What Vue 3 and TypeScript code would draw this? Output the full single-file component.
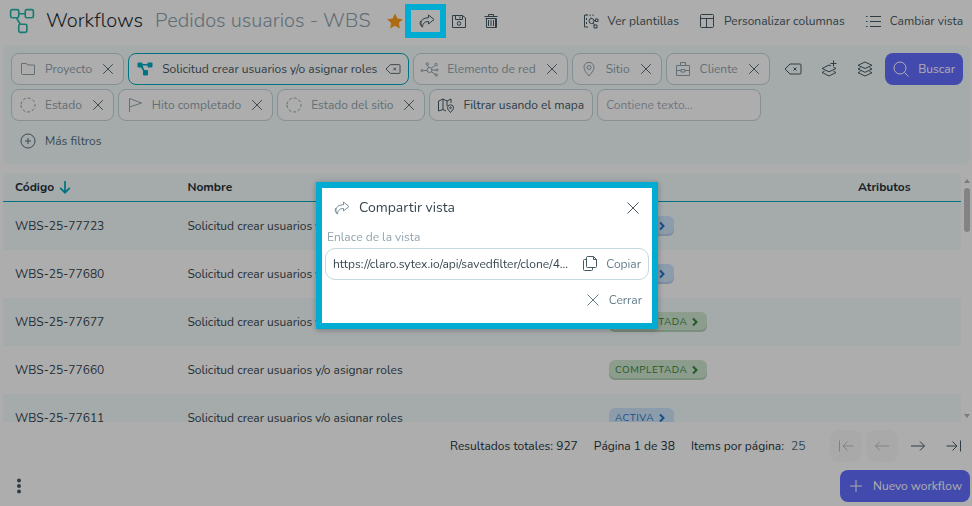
<script setup lang="ts">
import { h, ref } from 'vue'

interface Filter {
  icon: string
  label: string
  active?: boolean
}

interface Workflow {
  code: string
  name: string
  status: 'ACTIVA' | 'COMPLETADA'
}

// Stroke outlines on a 16 x 16 grid
const outlines: Record<string, string> = {
  share: 'M9.5 2 15 6.5 9.5 11V8.5C5.5 8.500 3.800 10.500 3.500 14 0 9.500 2.500 4.800 9.500 4.800ZM3.500 14C1 12.500 .7 10 1.600 8',
  save: 'M1.5 2.500h10L14.500 5v9.500H1.500ZM4.500 2.500v4h7v-4M9 3.500v2M6.200 10.500a1.800 1.800 0 1 0 3.600 0 1.800 1.800 0 1 0-3.600 0',
  trash: 'M1.5 3.5h13M5.5 3.5v-2h5v2M2.500 5.500h11V14.500H3.500V5.500M12.500 5.500v9M5.500 7v6M8 7v6M10.500 7v6',
  template: 'M4 2H1.5V14H5M4 1v2M7 1.5v1.5M10 1.5v1.5M3.5 5v2M3.5 9v2M6 8a2.5 2.5 0 1 0 5 0 2.5 2.5 0 1 0-5 0M11 7.5h1.5M12.5 6h2.5v2.5h-2.5ZM10 10l1.5 2M11 12h3v3h-3ZM8 6V4.5',
  columns: 'M2.5 1.5h11a1 1 0 0 1 1 1v11a1 1 0 0 1-1 1h-11a1 1 0 0 1-1-1v-11a1 1 0 0 1 1-1ZM1.5 5.5h13M7.5 5.5v9',
  list: 'M5 3.5h11M5 8.5h11M5 13.5h11M1 3.5h1.5M1 8.5h1.5M1 13.5h1.5',
  folder: 'M1.5 12.5v-10h4.5l2 1.5h6.5v9.5h-12a1 1 0 0 1-1-1Z',
  network: 'M5 9a2.500 2.500 0 1 0 5 0 2.500 2.500 0 1 0-5 0M-1 9.500a1 1 0 1 0 2 0 1 1 0 1 0-2 0M1 9.500h4M4 3a1.200 1.200 0 1 0 2.400 0A1.200 1.200 0 1 0 4 3M5.600 4.200l1 2.600M13 3.500a1.200 1.200 0 1 0 2.400 0A1.200 1.200 0 1 0 13 3.500M9.300 7.200l3.900-2.800M10 9h4M14 9a1 1 0 1 0 2 0 1 1 0 1 0-2 0M13 14a1.200 1.200 0 1 0 2.400 0 1.200 1.200 0 1 0-2.400 0M9.300 10.800l3.900 2.500',
  pin: 'M8 15C5 11.5 3 9 3 6.3a5 5 0 0 1 10 0C13 9 11 11.5 8 15ZM6 6.5a2 2 0 1 0 4 0 2 2 0 1 0-4 0',
  briefcase: 'M1.5 4.500h13v10h-13ZM5.500 4.500v-3h5v3M1.500 9.500h4.500M10 9.500h4.500M6 8.500h4v2.500h-4Z',
  flag: 'M2.5 15V1.5L14.5 6 2.5 10',
  map: 'M8 14 5 12.5 .5 14V4L5 2l4 2 4-2v4M5 2v10.5M9 4v5M12.5 15.500C10.800 13.500 9.500 12.300 9.500 10.800a3 3 0 0 1 6 0c0 1.500-1.300 2.700-3 4.700ZM11.700 10.800a.8.8 0 1 0 1.600 0 .8.8 0 1 0-1.600 0',
  plusCircle: 'M1 8a7 7 0 1 0 14 0 7 7 0 1 0-14 0M8 5v6M5 8h6',
  close: 'M2.500 2.500l11 11M13.500 2.500l-11 11',
  erase: 'M5 3H15a1 1 0 0 1 1 1v8a1 1 0 0 1-1 1H5L0 8ZM8.500 6.500l3 3M11.500 6.500l-3 3',
  layers: 'M8 1 15 4.300 8 7.500 1 4.300ZM3.500 6.800 1 8l7 3.300L15 8l-2.500-1.200M3.500 10.500 1 11.700 8 15l7-3.300-2.500-1.200',
  layersPlus: 'M10 5 8 4 1 7.500 8 10.800 15 7.500 12.500 6.300M3.500 10.300 1 11.500 8 15l7-3.500-2.500-1.200M12.500-.5v6M9.500 2.500h6',
  search: 'M1 7a6 6 0 1 0 12 0A6 6 0 1 0 1 7M11.300 11.300l4.200 4.200',
  arrowDown: 'M8 1v13.500M2.500 9l5.500 5.500L13.500 9',
  chevron: 'M6 4.500 9.500 8 6 11.500',
  copy: 'M5.500 .5h6l3 3v7a1 1 0 0 1-1 1h-8a1 1 0 0 1-1-1v-9a1 1 0 0 1 1-1ZM11.500 .5v3h3M4.500 3.500h-2a1 1 0 0 0-1 1v9a1 1 0 0 0 1 1h7a1 1 0 0 0 1-1v-2',
  first: 'M1.5 2.500v11M15.500 8H5M9.500 3.500 5 8l4.500 4.500',
  prev: 'M15 8H1.5M6 3.5 1.5 8 6 12.5',
  next: 'M1 8h13.5M10 3.5 14.5 8 10 12.5',
  last: 'M14.500 2.500v11M.5 8H11M6.500 3.500 11 8l-4.500 4.500',
  plus: 'M8 2v12M2 8h12',
  logo: 'M2 1h3a1 1 0 0 1 1 1v3a1 1 0 0 1-1 1H2a1 1 0 0 1-1-1V2a1 1 0 0 1 1-1ZM11 1h3a1 1 0 0 1 1 1v3a1 1 0 0 1-1 1h-3a1 1 0 0 1-1-1V2a1 1 0 0 1 1-1ZM7 10h3a1 1 0 0 1 1 1v3a1 1 0 0 1-1 1H7a1 1 0 0 1-1-1v-3a1 1 0 0 1 1-1ZM6 3.500h4M4.500 6 7 10',
  status: 'M1 8a7 7 0 1 0 14 0 7 7 0 1 0-14 0',
}

// Solid shapes on the same grid
const solids: Record<string, string> = {
  star: 'M8 .5l2.4 4.9 5.4.8-3.9 3.8.9 5.4L8 12.8l-4.8 2.6.9-5.4L.2 6.2l5.4-.8Z',
  dots: 'M6 2.5a2 2 0 1 0 4 0 2 2 0 1 0-4 0M6 8a2 2 0 1 0 4 0 2 2 0 1 0-4 0M6 13.5a2 2 0 1 0 4 0 2 2 0 1 0-4 0',
  nodes: 'M1.500 1.500h3a1 1 0 0 1 1 1V3h5v-.5a1 1 0 0 1 1-1h3a1 1 0 0 1 1 1v3a1 1 0 0 1-1 1h-3a1 1 0 0 1-1-1V4.500h-5L7.300 9H10a1 1 0 0 1 1 1v3.500a1 1 0 0 1-1 1H7a1 1 0 0 1-1-1V9.800L4 6.500H1.500a1 1 0 0 1-1-1v-3a1 1 0 0 1 1-1Z',
}

const Icon = ({ name }: { name: string }) =>
  h('svg', { viewBox: '0 0 16 16', class: ['icon', `icon-${name}`], 'aria-hidden': 'true' }, [
    name in solids
      ? h('path', { d: solids[name], fill: 'currentColor' })
      : h('path', { d: outlines[name], fill: 'none', stroke: 'currentColor' }),
  ])
Icon.props = ['name']

const firstFilters: Filter[] = [
  { icon: 'folder', label: 'Proyecto' },
  { icon: 'nodes', label: 'Solicitud crear usuarios y/o asignar roles', active: true },
  { icon: 'network', label: 'Elemento de red' },
  { icon: 'pin', label: 'Sitio' },
  { icon: 'briefcase', label: 'Cliente' },
]

const secondFilters: Filter[] = [
  { icon: 'status', label: 'Estado' },
  { icon: 'flag', label: 'Hito completado' },
  { icon: 'status', label: 'Estado del sitio' },
]

const name = 'Solicitud crear usuarios y/o asignar roles'
const workflows: Workflow[] = [
  { code: 'WBS-25-77723', name, status: 'ACTIVA' },
  { code: 'WBS-25-77680', name, status: 'ACTIVA' },
  { code: 'WBS-25-77677', name, status: 'COMPLETADA' },
  { code: 'WBS-25-77660', name, status: 'COMPLETADA' },
  { code: 'WBS-25-77611', name, status: 'ACTIVA' },
]

const link = ref('https://claro.sytex.io/api/savedfilter/clone/4...')
const query = ref('')
const pageSize = ref('25')
const shareOpen = ref(true)
</script>

<template>
  <div class="app">
    <header class="top">
      <Icon name="logo" class="logo" />
      <h1>Workflows</h1>
      <h2>Pedidos usuarios - WBS</h2>
      <div class="view-tools">
        <button class="tool star" aria-label="Favorito"><Icon name="star" /></button>
        <button class="tool marked" aria-label="Compartir" @click="shareOpen = true"><Icon name="share" /></button>
        <button class="tool" aria-label="Guardar"><Icon name="save" /></button>
        <button class="tool" aria-label="Eliminar"><Icon name="trash" /></button>
      </div>
      <nav class="actions">
        <button><Icon name="template" />Ver plantillas</button>
        <button><Icon name="columns" />Personalizar columnas</button>
        <button><Icon name="list" />Cambiar vista</button>
      </nav>
    </header>

    <section class="filters">
      <div class="filter-row">
        <button v-for="f in firstFilters" :key="f.label" class="chip" :class="{ active: f.active }">
          <Icon :name="f.icon" /><span>{{ f.label }}</span><Icon :name="f.active ? 'erase' : 'close'" class="clear" />
        </button>
        <div class="filter-tools">
          <button class="tool" aria-label="Limpiar filtros"><Icon name="erase" /></button>
          <button class="tool" aria-label="Guardar filtro"><Icon name="layersPlus" /></button>
          <button class="tool" aria-label="Filtros guardados"><Icon name="layers" /></button>
          <button class="primary"><Icon name="search" />Buscar</button>
        </div>
      </div>
      <div class="filter-row">
        <button v-for="f in secondFilters" :key="f.label" class="chip">
          <Icon :name="f.icon" /><span>{{ f.label }}</span><Icon name="close" class="clear" />
        </button>
        <button class="chip map"><Icon name="map" /><span>Filtrar usando el mapa</span></button>
        <input v-model="query" class="query" type="text" placeholder="Contiene texto..." aria-label="Contiene texto" />
      </div>
      <button class="more"><Icon name="plusCircle" />Más filtros</button>
    </section>

    <section class="list">
      <div class="table-wrap">
        <table>
          <thead>
            <tr>
              <th class="code"><span class="sorted">Código<Icon name="arrowDown" /></span></th>
              <th class="name">Nombre</th>
              <th class="state" aria-label="Estado"></th>
              <th class="attributes">Atributos</th>
            </tr>
          </thead>
          <tbody>
            <tr v-for="w in workflows" :key="w.code">
              <td>{{ w.code }}</td>
              <td>{{ w.name }}</td>
              <td>
                <button class="badge" :class="w.status.toLowerCase()">{{ w.status }}<Icon name="chevron" /></button>
              </td>
              <td></td>
            </tr>
          </tbody>
        </table>
      </div>
      <div class="scrollbar" aria-hidden="true">
        <i class="up"></i><i class="thumb"></i><i class="down"></i>
      </div>
    </section>

    <div class="pager">
      <span>Resultados totales: 927</span>
      <span>Página 1 de 38</span>
      <label>Items por página:
        <select v-model="pageSize"><option>25</option></select>
      </label>
      <div class="pages">
        <button disabled aria-label="Primera página"><Icon name="first" /></button>
        <button disabled aria-label="Página anterior"><Icon name="prev" /></button>
        <button aria-label="Página siguiente"><Icon name="next" /></button>
        <button aria-label="Última página"><Icon name="last" /></button>
      </div>
    </div>

    <footer>
      <button class="tool" aria-label="Más opciones"><Icon name="dots" /></button>
      <button class="primary"><Icon name="plus" />Nuevo workflow</button>
    </footer>

    <div v-if="shareOpen" class="overlay">
      <div class="dialog" role="dialog" aria-labelledby="share-title">
        <div class="dialog-head">
          <Icon name="share" />
          <h3 id="share-title">Compartir vista</h3>
          <button class="tool" aria-label="Cerrar ventana" @click="shareOpen = false"><Icon name="close" /></button>
        </div>
        <label class="link-label" for="share-link">Enlace de la vista</label>
        <div class="link-box">
          <input id="share-link" type="text" readonly :value="link" />
          <button><Icon name="copy" />Copiar</button>
        </div>
        <div class="dialog-foot">
          <button @click="shareOpen = false"><Icon name="close" />Cerrar</button>
        </div>
      </div>
    </div>
  </div>
</template>

<style>
body {
  margin: 0;
  background: #fff;
}
</style>

<style scoped>
.app,
.app * {
  box-sizing: border-box;
}

.app {
  display: flex;
  flex-direction: column;
  height: 100vh;
  padding: 0 2px 4px 3px;
  font-family: Nunito, Lato, sans-serif;
  font-size: 12px;
  line-height: 16px;
  color: #37474f;
  overflow: hidden;
}

button,
input,
select {
  margin: 0;
  padding: 0;
  border: 0;
  background: none;
  font: inherit;
  color: inherit;
}

button {
  display: flex;
  align-items: center;
  white-space: nowrap;
}

h1,
h2,
h3 {
  margin: 0;
  font-weight: 400;
}

.icon {
  flex: none;
  display: block;
  width: 16px;
  height: 16px;
  overflow: visible;
}

.top {
  display: flex;
  align-items: center;
  height: 45px;
  padding: 0 7px 4px 6px;
}

.logo {
  width: 26px;
  height: 26px;
  color: #26b5a7;
}

h1,
h2 {
  font-size: 20px;
  font-weight: 300;
  line-height: 26px;
  white-space: nowrap;
}

h1 {
  margin-left: 11px;
  color: #263238;
}

h2 {
  margin-left: 12px;
  color: #90a4ae;
}

.tool {
  justify-content: center;
  width: 32px;
  height: 32px;
  color: #455a64;
}

.view-tools {
  display: flex;
  margin-left: 8px;
}

.star {
  color: #ff9f1c;
}

.marked {
  position: relative;
}

.marked::after {
  content: '';
  position: absolute;
  z-index: 3;
  inset: -1px -3px -1px -6px;
  border: 6px solid #00acd2;
}

.actions {
  display: flex;
  gap: 20px;
  margin-left: auto;
  color: #455a64;
}

.actions button {
  gap: 9px;
}

.filters {
  display: flex;
  flex-direction: column;
  gap: 4px;
  padding: 8px 7px 7px 8px;
  border-radius: 8px;
  background: #f4fbfc;
}

.filter-row {
  display: flex;
  gap: 4px;
}

.chip {
  gap: 9px;
  height: 32px;
  padding: 0 8px;
  border: 1px solid #c3d5d6;
  border-radius: 8px;
  background: #fff;
  color: #90a4ae;
}

.chip .clear {
  width: 14px;
  height: 14px;
  color: #455a64;
}

.chip.active {
  border-color: #00acc1;
  color: #455a64;
}

.chip .icon-nodes {
  color: #00acc1;
}

.chip.map {
  color: #455a64;
}

.icon-status {
  stroke-dasharray: 3 2;
}

.filter-tools {
  display: flex;
  gap: 4px;
  margin-left: auto;
}

.primary {
  gap: 9px;
  height: 32px;
  padding: 0 8px;
  border-radius: 8px;
  background: #636eff;
  color: #fff;
}

.query {
  width: 164px;
  height: 32px;
  padding: 0 8px;
  border: 1px solid #c3d5d6;
  border-radius: 8px;
  background: #fff;
}

.query::placeholder {
  color: #a6afc0;
  opacity: 1;
}

.more {
  align-self: flex-start;
  gap: 9px;
  height: 32px;
  padding: 0 9px;
  color: #546e7a;
}

.list {
  display: flex;
  flex: 1;
  min-height: 0;
  margin-top: 9px;
}

.table-wrap {
  flex: 1;
  overflow: hidden;
  border-radius: 8px 0 0 0;
}

table {
  width: 100%;
  table-layout: fixed;
  border-collapse: separate;
  border-spacing: 0;
}

th {
  height: 29px;
  padding: 0 12px;
  border-bottom: 1px solid #00acc1;
  background: #f4fbfc;
  color: #263238;
  font-weight: 700;
  text-align: left;
}

.code {
  width: 18%;
}

.name {
  width: 44%;
}

.state {
  width: 22%;
}

.attributes {
  text-align: center;
}

.sorted {
  display: flex;
  align-items: center;
  gap: 4px;
}

.sorted .icon {
  width: 14px;
  height: 14px;
  color: #00acc1;
  stroke-width: 2;
}

td {
  height: 48px;
  padding: 0 12px;
}

tbody tr:nth-child(odd) {
  background: #f4fbfc;
}

.badge {
  height: 20px;
  padding: 0 4px 0 6px;
  border-radius: 6px;
  font-size: 10px;
  letter-spacing: 0.05em;
}

.badge .icon {
  stroke-width: 2;
}

.activa {
  background: #cfe6fd;
  box-shadow: inset 0 -2px #b7d2ec;
  color: #2276c9;
}

.completada {
  background: #cfe8d1;
  box-shadow: inset 0 -2px #b4d1b8;
  color: #35853b;
}

.scrollbar {
  display: flex;
  flex-direction: column;
  align-items: center;
  gap: 5px;
  width: 9px;
  padding: 6px 0 4px 2px;
}

.up,
.down {
  border: 3px solid transparent;
}

.up {
  border-top: 0;
  border-bottom: 4px solid #b5b5b5;
}

.down {
  margin-top: auto;
  border-top: 4px solid #b5b5b5;
  border-bottom: 0;
}

.thumb {
  width: 6px;
  height: 44px;
  border-radius: 3px;
  background: #c1c1c1;
}

.pager {
  display: flex;
  align-items: center;
  justify-content: flex-end;
  gap: 16px;
  height: 48px;
  color: #263238;
}

select {
  appearance: none;
  margin-left: 4px;
  color: #546e7a;
}

.pages {
  display: flex;
  gap: 4px;
  margin-left: 8px;
}

.pages button {
  justify-content: center;
  width: 32px;
  height: 32px;
  border-radius: 8px;
  color: #455a64;
}

.pages button:disabled {
  background: #fafafa;
  color: #b9c1c5;
}

footer {
  display: flex;
  align-items: center;
  justify-content: space-between;
}

.overlay {
  position: fixed;
  z-index: 2;
  inset: 0;
  display: flex;
  align-items: center;
  justify-content: center;
  padding: 5px 0 0 2px;
  background: rgba(0, 0, 0, 0.32);
}

.dialog {
  width: 342px;
  padding: 4px 3px 3px;
  border: 6px solid #00acd2;
  background: #fff;
  color: #607d8b;
  box-shadow: 0 1px 6px rgba(0, 0, 0, 0.3);
}

.dialog-head {
  display: flex;
  align-items: center;
  gap: 9px;
  height: 32px;
  padding-left: 9px;
}

.dialog-head > .icon {
  color: #78909c;
}

.dialog-head .tool {
  margin-left: auto;
}

h3 {
  font-size: 14px;
  line-height: 20px;
  color: #37474f;
}

.link-label {
  display: block;
  padding: 5px 2px 3px;
  color: #90a4ae;
}

.link-box {
  display: flex;
  align-items: center;
  gap: 14px;
  height: 32px;
  padding: 0 7px;
  border: 1px solid #c3d9dc;
  border-radius: 10px;
}

.link-box input {
  flex: 1;
  min-width: 0;
  color: #37474f;
  text-overflow: ellipsis;
}

.link-box button,
.dialog-foot button {
  gap: 8px;
}

.link-box .icon {
  color: #455a64;
}

.dialog-foot {
  display: flex;
  justify-content: flex-end;
  padding: 12px 7px;
}
</style>
